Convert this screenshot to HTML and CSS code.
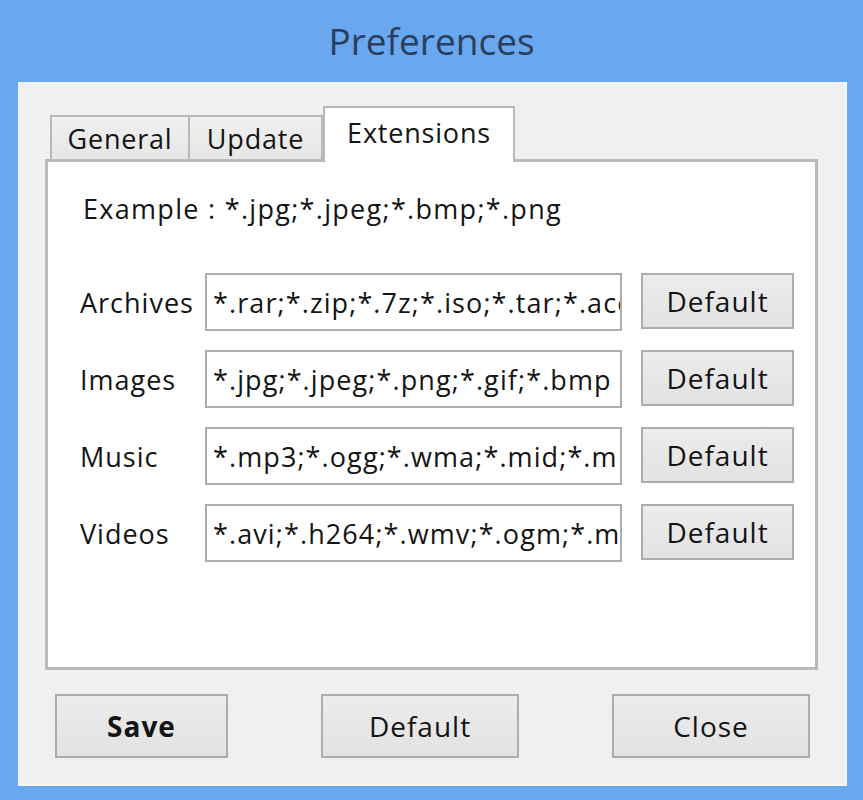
FILE: index.html
```html
<!DOCTYPE html>
<html lang="en">
<head>
<meta charset="utf-8">
<title>Preferences</title>
<link rel="stylesheet" href="styles.css">
</head>
<body>
<div class="titlebar">Preferences</div>
<div class="window">
  <div class="tabs">
    <div class="tab">General</div>
    <div class="tab">Update</div>
    <div class="tab active">Extensions</div>
  </div>
  <div class="panel">
    <div class="example">Example : *.jpg;*.jpeg;*.bmp;*.png</div>
    <div class="grid">
      <div class="label">Archives</div>
      <div class="field">*.rar;*.zip;*.7z;*.iso;*.tar;*.ace</div>
      <div class="btn">Default</div>
      <div class="label">Images</div>
      <div class="field">*.jpg;*.jpeg;*.png;*.gif;*.bmp</div>
      <div class="btn">Default</div>
      <div class="label">Music</div>
      <div class="field">*.mp3;*.ogg;*.wma;*.mid;*.m</div>
      <div class="btn">Default</div>
      <div class="label">Videos</div>
      <div class="field">*.avi;*.h264;*.wmv;*.ogm;*.m</div>
      <div class="btn">Default</div>
    </div>
  </div>
  <div class="actions">
    <div class="btn big save">Save</div>
    <div class="btn big wide">Default</div>
    <div class="btn big wide">Close</div>
  </div>
</div>
</body>
</html>
```
FILE: styles.css
```css
html, body {
  margin: 0;
  padding: 0;
}
body {
  background: #69a7ee;
  font-family: "Open Sans", "Noto Sans", sans-serif;
  color: #141414;
  width: 863px;
  height: 800px;
  overflow: hidden;
}
.titlebar {
  height: 82px;
  display: flex;
  align-items: center;
  justify-content: center;
  font-size: 37px;
  color: #2a3f5e;
  padding-bottom: 2px;
  box-sizing: border-box;
}
.window {
  margin: 0 16px 0 18px;
  height: 704px;
  background: #f0f0f0;
  box-sizing: border-box;
  padding: 26px 27px 0 27px;
  border-right: 2px solid #f7f7f7;
  border-bottom: 2px solid #f7f7f7;
}
.tabs {
  display: flex;
  align-items: flex-end;
  padding-left: 5px;
  height: 54px;
  position: relative;
  z-index: 2;
  margin-bottom: -3px;
}
.tab {
  height: 44px;
  box-sizing: border-box;
  border: 2px solid #b9b9b9;
  border-bottom: none;
  background: linear-gradient(#f0f0f0, #e6e6e6);
  font-size: 27px;
  letter-spacing: 0.8px;
  display: flex;
  align-items: center;
  justify-content: center;
  margin-bottom: 3px;
  line-height: 1;
}
.tab:nth-child(1) { width: 140px; }
.tab:nth-child(2) { width: 133px; border-left: none; }
.tab.active {
  width: 192px;
  height: 56px;
  background: #fff;
  margin-bottom: 0;
  border-left: 2px solid #b9b9b9;
  padding-bottom: 6px;
}
.panel {
  height: 511px;
  background: #fff;
  border: 3px solid #b9b9b9;
  box-sizing: border-box;
  padding: 31px 0 0 32px;
  position: relative;
  z-index: 1;
}
.example {
  font-size: 27px;
  letter-spacing: 1.3px;
  line-height: 32px;
  padding-left: 3px;
}
.grid {
  margin-top: 48px;
  display: grid;
  grid-template-columns: 125px 436px 153px;
  grid-auto-rows: 58px;
  row-gap: 19px;
}
.label {
  font-size: 27px;
  letter-spacing: 1px;
  display: flex;
  align-items: center;
  white-space: nowrap;
}
.field {
  width: 417px;
  border: 2px solid #acacac;
  background: #fff;
  font-size: 27px;
  letter-spacing: 1.1px;
  white-space: nowrap;
  overflow: hidden;
  padding: 0 6px;
  display: flex;
  align-items: center;
  box-sizing: border-box;
}
.btn {
  border: 2px solid #acacac;
  background: linear-gradient(#ececec, #e2e2e2);
  box-sizing: border-box;
  font-size: 28px;
  letter-spacing: 1px;
  display: flex;
  align-items: center;
  justify-content: center;
}
.grid .btn {
  height: 56px;
}
.actions {
  display: flex;
  justify-content: space-between;
  padding: 0 8px 0 10px;
  margin-top: 24px;
}
.btn.big {
  height: 64px;
  font-size: 28px;
}
.btn.save {
  width: 173px;
  font-weight: 700;
}
.btn.wide {
  width: 198px;
}
```
